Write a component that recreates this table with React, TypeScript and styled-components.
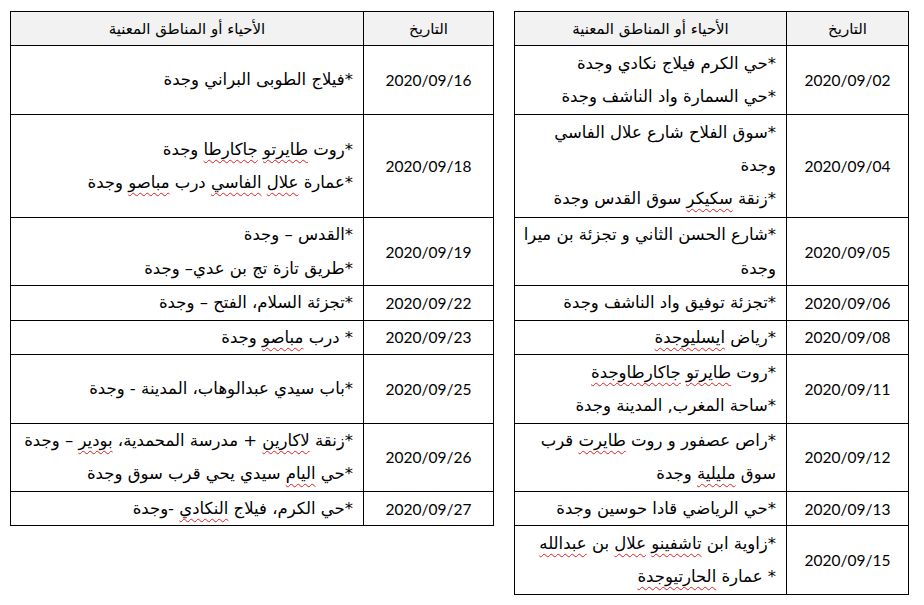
import React, { ReactNode } from 'react';
import styled, { createGlobalStyle } from 'styled-components';

type TRow = {
  date: string;
  span: number;
  lines: ReactNode[];
};

const LINE = 34.3;

const Typo = styled.span`
  text-decoration: underline wavy #e02020;
  text-decoration-thickness: 1px;
  text-underline-offset: 4px;
  text-decoration-skip-ink: none;
`;

const rightRows: TRow[] = [
  {
    date: '2020/09/02',
    span: 2,
    lines: ['*حي الكرم فيلاج نكادي وجدة', '*حي السمارة واد الناشف وجدة'],
  },
  {
    date: '2020/09/04',
    span: 3,
    lines: [
      '*سوق الفلاح شارع علال الفاسي',
      'وجدة',
      <>
        *زنقة <Typo>سكيكر</Typo> سوق القدس وجدة
      </>,
    ],
  },
  {
    date: '2020/09/05',
    span: 2,
    lines: ['*شارع الحسن الثاني و تجزئة بن ميرا', 'وجدة'],
  },
  { date: '2020/09/06', span: 1, lines: ['*تجزئة توفيق واد الناشف وجدة'] },
  {
    date: '2020/09/08',
    span: 1,
    lines: [
      <>
        *رياض <Typo>ايسليوجدة</Typo>
      </>,
    ],
  },
  {
    date: '2020/09/11',
    span: 2,
    lines: [
      <>
        *روت <Typo>طايرتو</Typo> <Typo>جاكارطاوجدة</Typo>
      </>,
      '*ساحة المغرب, المدينة وجدة',
    ],
  },
  {
    date: '2020/09/12',
    span: 2,
    lines: [
      <>
        *راص عصفور و روت <Typo>طايرت</Typo> قرب
      </>,
      <>
        سوق <Typo>مليلية</Typo> وجدة
      </>,
    ],
  },
  { date: '2020/09/13', span: 1, lines: ['*حي الرياضي قادا حوسين وجدة'] },
  {
    date: '2020/09/15',
    span: 2,
    lines: [
      <>
        *زاوية ابن <Typo>تاشفينو</Typo> <Typo>علال</Typo> بن <Typo>عبدالله</Typo>
      </>,
      <>
        * عمارة <Typo>الحارتيوجدة</Typo>
      </>,
    ],
  },
];

const leftRows: TRow[] = [
  { date: '2020/09/16', span: 2, lines: ['*فيلاج الطوبى البراني وجدة'] },
  {
    date: '2020/09/18',
    span: 3,
    lines: [
      <>
        *روت <Typo>طايرتو</Typo> <Typo>جاكارطا</Typo> وجدة
      </>,
      <>
        *عمارة <Typo>علال</Typo> <Typo>الفاسي</Typo> درب <Typo>مباصو</Typo> وجدة
      </>,
    ],
  },
  {
    date: '2020/09/19',
    span: 2,
    lines: ['*القدس – وجدة', '*طريق تازة تج بن عدي– وجدة'],
  },
  { date: '2020/09/22', span: 1, lines: ['*تجزئة السلام، الفتح – وجدة'] },
  {
    date: '2020/09/23',
    span: 1,
    lines: [
      <>
        * درب <Typo>مباصو</Typo> وجدة
      </>,
    ],
  },
  { date: '2020/09/25', span: 2, lines: ['*باب سيدي عبدالوهاب، المدينة - وجدة'] },
  {
    date: '2020/09/26',
    span: 2,
    lines: [
      <>
        *زنقة <Typo>لاكارين</Typo> + مدرسة المحمدية، <Typo>بودير</Typo> – وجدة
      </>,
      <>
        *حي <Typo>اليام</Typo> سيدي يحي قرب سوق وجدة
      </>,
    ],
  },
  {
    date: '2020/09/27',
    span: 1,
    lines: [
      <>
        *حي الكرم، فيلاج <Typo>النكادي</Typo> -وجدة
      </>,
    ],
  },
];

const GlobalStyle = createGlobalStyle`
  html, body {
    margin: 0;
    padding: 0;
    background: #ffffff;
  }
`;

const Page = styled.div`
  direction: rtl;
  display: flex;
  align-items: flex-start;
  gap: 20px;
  padding: 11px 15px 0 0;
  color: #000;
  font-family: 'DejaVu Sans', sans-serif;
`;

const Table = styled.table<{ $width: number }>`
  width: ${(p) => p.$width}px;
  border-collapse: collapse;
  table-layout: fixed;
`;

const HeadCell = styled.th`
  height: ${LINE - 1}px;
  padding: 0;
  border: 1px solid #000;
  background: #f2f2f2;
  font-weight: normal;
  font-size: 15px;
  line-height: 20px;
  text-align: center;
  vertical-align: middle;
`;

const DateCell = styled.td<{ $span: number }>`
  height: ${(p) => p.$span * LINE - 1}px;
  padding: 0;
  border: 1px solid #000;
  text-align: center;
  vertical-align: middle;
  font-family: Lato, 'Open Sans', sans-serif;
  font-size: 15.5px;
  direction: ltr;
`;

const PlaceCell = styled.td`
  padding: 0 10px 0 4px;
  border: 1px solid #000;
  text-align: right;
  vertical-align: middle;
  font-size: 16.5px;
`;

const Line = styled.div`
  line-height: 33.2px;
  white-space: nowrap;
`;

const Schedule = ({
  rows,
  width,
  dateWidth,
}: {
  rows: TRow[];
  width: number;
  dateWidth: number;
}) => (
  <Table $width={width}>
    <colgroup>
      <col style={{ width: dateWidth }} />
      <col />
    </colgroup>
    <thead>
      <tr>
        <HeadCell>التاريخ</HeadCell>
        <HeadCell>الأحياء أو المناطق المعنية</HeadCell>
      </tr>
    </thead>
    <tbody>
      {rows.map((row) => (
        <tr key={row.date}>
          <DateCell $span={row.span}>{row.date}</DateCell>
          <PlaceCell>
            {row.lines.map((line, i) => (
              <Line key={i}>{line}</Line>
            ))}
          </PlaceCell>
        </tr>
      ))}
    </tbody>
  </Table>
);

const App = () => (
  <>
    <GlobalStyle />
    <Page>
      <Schedule rows={rightRows} width={395} dateWidth={122} />
      <Schedule rows={leftRows} width={484} dateWidth={130} />
    </Page>
  </>
);

export default App;
